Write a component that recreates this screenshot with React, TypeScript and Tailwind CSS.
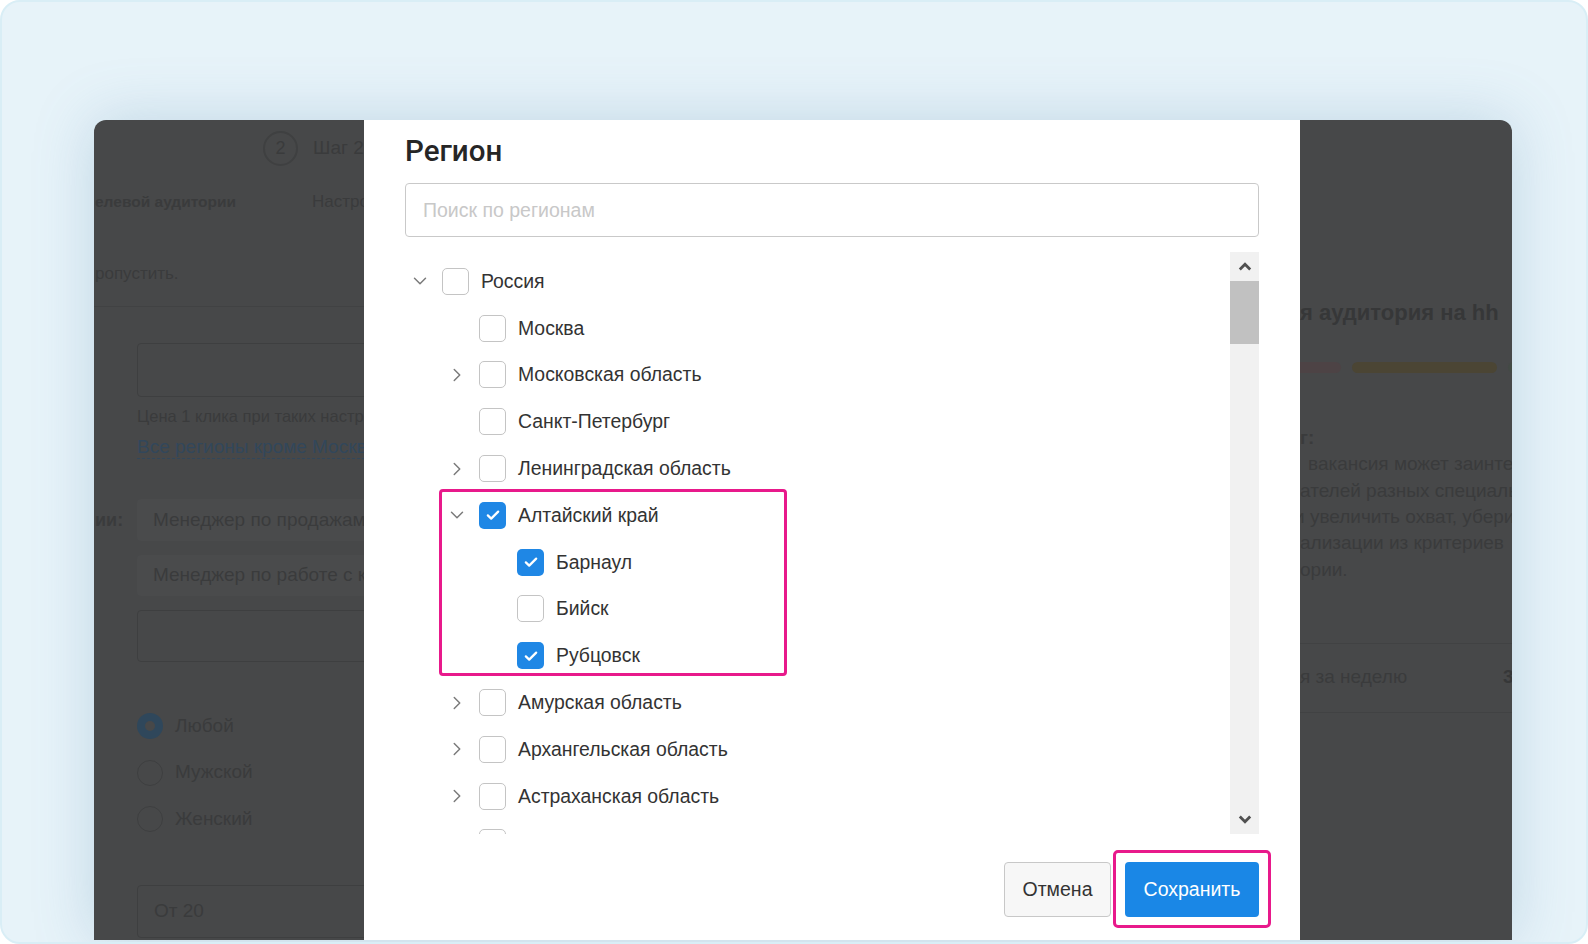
import { ChevronDown, ChevronRight } from "lucide-react";

type Row = {
  label: string;
  level: 0 | 1 | 2;
  arrow?: "down" | "right";
  checked?: boolean;
};

const indent = ["pl-0", "pl-[37px]", "pl-[75px]"];

const top: Row[] = [
  { label: "Россия", level: 0, arrow: "down" },
  { label: "Москва", level: 1 },
  { label: "Московская область", level: 1, arrow: "right" },
  { label: "Санкт-Петербург", level: 1 },
  { label: "Ленинградская область", level: 1, arrow: "right" },
];

const altai: Row[] = [
  { label: "Алтайский край", level: 1, arrow: "down", checked: true },
  { label: "Барнаул", level: 2, checked: true },
  { label: "Бийск", level: 2 },
  { label: "Рубцовск", level: 2, checked: true },
];

const rest: Row[] = [
  { label: "Амурская область", level: 1, arrow: "right" },
  { label: "Архангельская область", level: 1, arrow: "right" },
  { label: "Астраханская область", level: 1, arrow: "right" },
  { label: "Белгородская область", level: 1, arrow: "right" },
];

function Checkbox({ checked }: { checked?: boolean }) {
  if (checked) {
    return (
      <span className="flex h-[27px] w-[27px] shrink-0 items-center justify-center rounded-[5px] bg-[#1f87e5]">
        <svg width="18" height="18" viewBox="0 0 16 16" fill="none">
          <path d="M3.4 8.3l3 2.9L12.6 5" stroke="#fff" strokeWidth="2" strokeLinecap="round" strokeLinejoin="round" />
        </svg>
      </span>
    );
  }
  return <span className="block h-[27px] w-[27px] shrink-0 rounded-[5px] border-[1.5px] border-[#c4c4c4] bg-white" />;
}

function TreeRow({ row }: { row: Row }) {
  return (
    <div className={`flex h-[46.8px] items-center ${indent[row.level]}`}>
      <span className="flex w-[29px] shrink-0 justify-center text-[#7a7a7a]">
        {row.arrow === "down" ? <ChevronDown size={22} strokeWidth={1.6} /> : null}
        {row.arrow === "right" ? <ChevronRight size={22} strokeWidth={1.6} /> : null}
      </span>
      <span className="ml-[8px] flex shrink-0">
        <Checkbox checked={row.checked} />
      </span>
      <span className="ml-[12px] whitespace-nowrap text-[19.4px] text-[#333]">{row.label}</span>
    </div>
  );
}

function Scrollbar() {
  return (
    <div className="flex w-[29px] shrink-0 flex-col bg-[#f1f1f1]">
      <div className="flex h-[29px] items-center justify-center">
        <svg width="14" height="9" viewBox="0 0 14 9" fill="none">
          <path d="M1.8 7.5L7 2.3l5.2 5.2" stroke="#505050" strokeWidth="2.8" />
        </svg>
      </div>
      <div className="h-[63px] bg-[#c1c1c1]" />
      <div className="flex-1" />
      <div className="flex h-[29px] items-center justify-center">
        <svg width="14" height="9" viewBox="0 0 14 9" fill="none">
          <path d="M1.8 1.5L7 6.7l5.2-5.2" stroke="#505050" strokeWidth="2.8" />
        </svg>
      </div>
    </div>
  );
}

function RegionModal() {
  return (
    <div className="flex w-[936px] shrink-0 flex-col bg-white px-[41px] pt-[13px]">
      <h2 className="h-[36px] font-['Roboto',sans-serif] text-[29.5px] leading-[36px] font-medium text-[#262626]">Регион</h2>
      <input
        className="mt-[14px] h-[54px] w-full rounded-[4px] border border-[#c9c9c9] px-[17px] text-[19.5px] outline-none placeholder:text-[#c8c8c8]"
        placeholder="Поиск по регионам"
      />
      <div className="mt-[15px] flex h-[582px]">
        <div className="flex-1 overflow-hidden pt-[6px]">
          {top.map((r) => (
            <TreeRow key={r.label} row={r} />
          ))}
          <div className="relative">
            {altai.map((r) => (
              <TreeRow key={r.label} row={r} />
            ))}
            <div className="pointer-events-none absolute top-[-3px] left-[33.5px] h-[187.5px] w-[348.5px] rounded-[4px] border-[3px] border-[#e8198b]" />
          </div>
          {rest.map((r) => (
            <TreeRow key={r.label} row={r} />
          ))}
        </div>
        <Scrollbar />
      </div>
      <div className="mt-[28px] flex justify-end gap-[14px]">
        <button className="h-[55px] w-[107px] rounded-[4px] border border-[#c8c8c8] bg-[#f7f7f7] text-[19.5px] text-[#333]">
          Отмена
        </button>
        <span className="relative">
          <button className="h-[55px] w-[134px] rounded-[4px] bg-[#1a87e6] text-[19.5px] text-white">Сохранить</button>
          <span className="pointer-events-none absolute -inset-x-[12px] -top-[12px] -bottom-[11px] rounded-[5px] border-[3px] border-[#e8198b]" />
        </span>
      </div>
    </div>
  );
}

function LeftBehind() {
  return (
    <div className="w-[270px] shrink-0 overflow-hidden text-[#3a3b3c]">
      <div className="mt-[10px] flex h-[36px] items-center pl-[169px]">
        <span className="flex h-[35px] w-[35px] shrink-0 items-center justify-center rounded-full border-2 border-[#3f4041] text-[18px]">
          2
        </span>
        <span className="ml-[15px] whitespace-nowrap text-[19px]">Шаг 2</span>
      </div>
      <div className="mt-[24px] flex h-[24px] items-center whitespace-nowrap pl-[1px] text-[15.5px]">
        <span className="w-[217px] shrink-0 font-bold">елевой аудитории</span>
        <span className="text-[17px]">Настройки</span>
      </div>
      <div className="mt-[48px] flex h-[24px] items-center pl-[1px] text-[17px]">ропустить.</div>
      <div className="mt-[20px] h-px bg-[#414243]" />
      <div className="mt-[36px] ml-[43px] h-[54px] w-[400px] rounded-[4px] border border-[#3e3f40]" />
      <div className="mt-[9px] ml-[43px] h-[20px] whitespace-nowrap text-[16.5px] leading-[20px]">Цена 1 клика при таких настройках</div>
      <div className="mt-[9px] ml-[43px] h-[24px] whitespace-nowrap">
        <span className="inline-block border-b border-dashed border-[#32475b] text-[19px] leading-[23px] text-[#32475b]">
          Все регионы кроме Москвы
        </span>
      </div>
      <div className="mt-[40px] flex h-[42px] items-center">
        <span className="w-[43px] shrink-0 pl-[1px] text-[18px] font-bold">ии:</span>
        <div className="flex h-full w-[400px] shrink-0 items-center rounded-[4px] bg-[#4a4b4c] pl-[16px] text-[19px] whitespace-nowrap">
          Менеджер по продажам
        </div>
      </div>
      <div className="mt-[14px] ml-[43px] flex h-[41px] w-[400px] items-center rounded-[4px] bg-[#4a4b4c] pl-[16px] text-[19px] whitespace-nowrap">
        Менеджер по работе с клиентами
      </div>
      <div className="mt-[14px] ml-[43px] h-[52px] w-[400px] rounded-[4px] border border-[#3e3f40]" />
      <div className="mt-[51px] ml-[43px] flex flex-col gap-[20.5px] text-[19px]">
        <div className="flex h-[26px] items-center gap-[12px]">
          <span className="flex h-[26px] w-[26px] items-center justify-center rounded-full bg-[#2f475b]">
            <span className="h-[10px] w-[10px] rounded-full bg-[#474849]" />
          </span>
          Любой
        </div>
        <div className="flex h-[26px] items-center gap-[12px]">
          <span className="h-[26px] w-[26px] rounded-full border border-[#3e3f40]" />
          Мужской
        </div>
        <div className="flex h-[26px] items-center gap-[12px]">
          <span className="h-[26px] w-[26px] rounded-full border border-[#3e3f40]" />
          Женский
        </div>
      </div>
      <div className="mt-[53px] ml-[43px] flex h-[53px] w-[400px] items-center rounded-[4px] border border-[#3e3f40] pl-[16px] text-[19px]">
        От 20
      </div>
    </div>
  );
}

function RightBehind() {
  return (
    <div className="w-[212px] shrink-0 overflow-hidden whitespace-nowrap text-[#3a3b3c]">
      <div className="mt-[180px] h-[26px] text-[22px] leading-[26px] font-bold text-[#363738]">я аудитория на hh</div>
      <div className="mt-[35.5px] flex h-[11px] gap-[11px]">
        <span className="w-[41px] shrink-0 rounded-r-full bg-[#4d4345]" />
        <span className="w-[145px] shrink-0 rounded-full bg-[#4b4534]" />
        <span className="w-[60px] shrink-0 rounded-full bg-[#434a45]" />
      </div>
      <div className="mt-[52.3px] text-[19px] leading-[26.4px]">
        <div className="font-bold">г:</div>
        <div className="pl-[8px]">вакансия может заинтересовать</div>
        <div>ателей разных специальностей.</div>
        <div className="-ml-[6px]">и увеличить охват, уберите</div>
        <div>ализации из критериев</div>
        <div>ории.</div>
      </div>
      <div className="mt-[59.8px] h-px bg-[#414243]" />
      <div className="mt-[20px] flex h-[26px] items-center text-[19px]">
        <span className="w-[203px] shrink-0">я за неделю</span>
        <span className="font-bold text-[#363738]">3</span>
      </div>
      <div className="mt-[22px] h-px bg-[#414243]" />
    </div>
  );
}

export default function App() {
  return (
    <div className="h-[944px] w-[1588px] bg-white font-['Liberation_Sans',Arial,sans-serif]">
      <div className="flex h-full flex-col overflow-hidden rounded-[20px] border-2 border-[#d9eef6] bg-[#e7f3f9] pt-[118px] pb-[2px] pl-[92px]">
        <div className="flex w-[1418px] flex-1 overflow-hidden rounded-t-[12px] bg-[#474849] shadow-[0_0_60px_rgba(90,140,180,0.28)]">
          <LeftBehind />
          <RegionModal />
          <RightBehind />
        </div>
      </div>
    </div>
  );
}
